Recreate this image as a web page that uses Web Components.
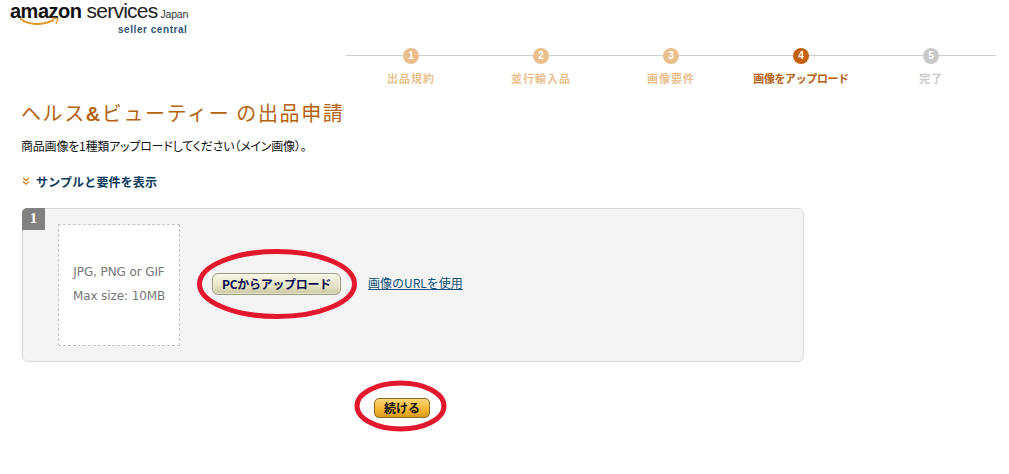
<!DOCTYPE html>
<html lang="ja">
<head>
<meta charset="utf-8">
<title>Seller Central</title>
<style>
  html, body { margin: 0; padding: 0; background: #fff; }
  body { font-family: "Liberation Sans", "Noto Sans CJK JP", sans-serif; font-size: 12px; color: #000; }
</style>
</head>
<body>
<seller-page>
  <seller-logo></seller-logo>
  <step-bar>
    <step-item num="1" state="done">出品規約</step-item>
    <step-item num="2" state="done">並行輸入品</step-item>
    <step-item num="3" state="done">画像要件</step-item>
    <step-item num="4" state="current">画像をアップロード</step-item>
    <step-item num="5" state="todo">完了</step-item>
  </step-bar>
  <page-title><span>ヘルス</span><b>&amp;</b><span>ビューティー の出品申請</span></page-title>
  <intro-text>商品画像を1種類アップロードしてください（メイン画像）。</intro-text>
  <toggle-link>サンプルと要件を表示</toggle-link>
  <upload-panel num="1"></upload-panel>
  <continue-row></continue-row>
</seller-page>

<script>
const CJK = '"Noto Sans CJK JP", sans-serif';

class SellerPage extends HTMLElement {
  connectedCallback() {
    this.attachShadow({ mode: 'open' });
    this.shadowRoot.innerHTML = `
      <style>
        :host { display: flex; flex-direction: column; width: 1009px; height: 474px; overflow: hidden; }
      </style>
      <slot></slot>`;
  }
}

class SellerLogo extends HTMLElement {
  connectedCallback() {
    this.attachShadow({ mode: 'open' });
    this.shadowRoot.innerHTML = `
      <style>
        :host { display: block; height: 36px; padding: 0 0 0 10px; position: relative; font-family: "Liberation Sans", sans-serif; }
        .top { display: flex; align-items: baseline; line-height: 21px; white-space: nowrap; color: #111; }
        .a { font-size: 20px; font-weight: bold; letter-spacing: -0.5px; }
        .s { font-size: 21px; margin-left: 5px; letter-spacing: -0.75px; color: #222; }
        .j { font-size: 10.5px; margin-left: 3px; letter-spacing: -0.2px; color: #333; }
        .sub { font-size: 10px; font-weight: bold; color: #2d5578; margin: 0 0 0 108px; line-height: 10px; letter-spacing: 0.55px; }
        svg { position: absolute; left: 19px; top: 17px; }
      </style>
      <div class="top"><span class="a">amazon</span><span class="s">services</span><span class="j">Japan</span></div>
      <div class="sub">seller central</div>
      <svg width="40" height="10" viewBox="0 0 40 10">
        <path d="M1 1.5 C9 8 22 9 35 3" fill="none" stroke="#e8982a" stroke-width="2"/>
        <path d="M33 1 L39 1.5 L37 7" fill="none" stroke="#e8982a" stroke-width="1.3"/>
      </svg>`;
  }
}

class StepBar extends HTMLElement {
  connectedCallback() {
    this.attachShadow({ mode: 'open' });
    this.shadowRoot.innerHTML = `
      <style>
        :host { display: flex; margin: 10px 0 0 346px; width: 650px; height: 50px; position: relative; }
        .line { position: absolute; left: 0; right: 0; top: 9px; height: 1px; background: #cfcfcf; }
        ::slotted(step-item) { flex: 1 1 0; }
      </style>
      <div class="line"></div>
      <slot></slot>`;
  }
}

class StepItem extends HTMLElement {
  connectedCallback() {
    const colors = { done: '#eabf8e', current: '#c4620f', todo: '#c9c9c9' };
    const text = { done: '#eabf8e', current: '#b5600f', todo: '#c9c9c9' };
    const state = this.getAttribute('state');
    const spacing = state === 'current' ? '-0.4px' : '1px';
    this.attachShadow({ mode: 'open' });
    this.shadowRoot.innerHTML = `
      <style>
        :host { display: flex; flex-direction: column; align-items: center; position: relative; font-family: ${CJK}; }
        .dot { width: 16px; height: 16px; border-radius: 50%; margin-top: 2px; background: ${colors[state]};
               color: #fff; font: bold 10px/16px "Liberation Sans", sans-serif; text-align: center; }
        .label { margin-top: 7px; font-size: 11px; line-height: 14px; font-weight: bold; letter-spacing: ${spacing}; color: ${text[state]}; white-space: nowrap; }
      </style>
      <div class="dot">${this.getAttribute('num')}</div>
      <div class="label"><slot></slot></div>`;
  }
}

class PageTitle extends HTMLElement {
  connectedCallback() {
    this.attachShadow({ mode: 'open' });
    this.shadowRoot.innerHTML = `
      <style>
        :host { display: block; margin: 3px 0 0 21px; height: 28px; line-height: 28px; font-family: ${CJK}; font-size: 20px;
                color: #b5620c; letter-spacing: 1.6px; white-space: nowrap; font-weight: 400; }
        ::slotted(b) { font-family: "Liberation Sans", sans-serif; font-weight: bold; }
      </style>
      <slot></slot>`;
  }
}

class IntroText extends HTMLElement {
  connectedCallback() {
    this.attachShadow({ mode: 'open' });
    this.shadowRoot.innerHTML = `
      <style>
        :host { display: block; margin: 11px 0 0 21px; line-height: 16px; font-size: 12px; font-family: ${CJK}; color: #111;
                font-feature-settings: "palt"; letter-spacing: -0.2px; white-space: nowrap; }
      </style>
      <slot></slot>`;
  }
}

class ToggleLink extends HTMLElement {
  connectedCallback() {
    this.attachShadow({ mode: 'open' });
    this.shadowRoot.innerHTML = `
      <style>
        :host { display: flex; align-items: center; gap: 6px; margin: 19px 0 0 22px; height: 16px; font-size: 12px; font-weight: bold;
                font-family: ${CJK}; color: #0b3b5c; white-space: nowrap; letter-spacing: 0.15px; }
      </style>
      <svg width="8" height="8" viewBox="0 0 8 8">
        <path d="M1 1 L4 3.5 L7 1 M1 4.5 L4 7 L7 4.5" fill="none" stroke="#d58a2c" stroke-width="1.4"/>
      </svg>
      <span><slot></slot></span>`;
  }
}

class UploadPanel extends HTMLElement {
  connectedCallback() {
    this.attachShadow({ mode: 'open' });
    this.shadowRoot.innerHTML = `
      <style>
        :host { display: flex; align-items: center; box-sizing: border-box; position: relative; margin: 19px 0 0 22px; width: 782px; height: 154px;
                padding-left: 35px; background: #f4f4f4; border: 1px solid #d8d8d8; border-radius: 6px; font-family: ${CJK}; }
        .num { position: absolute; left: -1px; top: -1px; width: 23px; height: 22px; background: #808080; border-radius: 5px 0 0 0;
               color: #fff; font: bold 15px/21px "Liberation Serif", serif; text-align: center; }
        .drop { box-sizing: border-box; width: 122px; height: 122px; padding-bottom: 2px; background: #fff; border: 1px dashed #c4c4c4;
                display: flex; flex-direction: column; justify-content: center; align-items: center; gap: 8px;
                font: 12px/16px "DejaVu Sans", sans-serif; color: #777; letter-spacing: -0.1px; }
        .pc { box-sizing: border-box; margin: -2px 0 0 32px; width: 129px; height: 22px; border: 1px solid #9a9a7c; border-radius: 6px;
              background: linear-gradient(#f8f7e8, #e6e4c6 60%, #c9c6a0); box-shadow: inset 0 0 0 1px rgba(255,255,255,.5);
              font-size: 12px; line-height: 20px; font-weight: bold; color: #0b0b50; text-align: center; white-space: nowrap; letter-spacing: -0.3px; }
        a { margin: -5px 0 0 27px; font-size: 12px; color: #0b4f78; text-decoration: underline; letter-spacing: 0; white-space: nowrap; }
        .ring { position: absolute; left: 173px; top: 38px; pointer-events: none; }
      </style>
      <div class="num">${this.getAttribute('num')}</div>
      <div class="drop"><span>JPG, PNG or GIF</span><span>Max size: 10MB</span></div>
      <div class="pc">PCからアップロード</div>
      <a href="#">画像のURLを使用</a>
      <svg class="ring" width="162" height="74" viewBox="0 0 162 74">
        <ellipse cx="81" cy="37" rx="77.5" ry="32.5" fill="none" stroke="#e3172d" stroke-width="5"/>
      </svg>`;
  }
}

class ContinueRow extends HTMLElement {
  connectedCallback() {
    this.attachShadow({ mode: 'open' });
    this.shadowRoot.innerHTML = `
      <style>
        :host { display: block; position: relative; margin: 36px 0 0 374px; font-family: ${CJK}; }
        .go { box-sizing: border-box; width: 56px; height: 20px; border: 1px solid #8a6a20; border-radius: 5px;
              background: linear-gradient(#fbd67a, #f3b52f 60%, #d99a1e); font-size: 12px; line-height: 18px; font-weight: bold; color: #111; text-align: center; }
        svg { position: absolute; left: -20px; top: -19px; pointer-events: none; }
      </style>
      <div class="go">続ける</div>
      <svg width="93" height="54" viewBox="0 0 93 54">
        <ellipse cx="46.5" cy="27" rx="43.5" ry="23" fill="none" stroke="#e3172d" stroke-width="5"/>
      </svg>`;
  }
}

customElements.define('seller-page', SellerPage);
customElements.define('seller-logo', SellerLogo);
customElements.define('step-bar', StepBar);
customElements.define('step-item', StepItem);
customElements.define('page-title', PageTitle);
customElements.define('intro-text', IntroText);
customElements.define('toggle-link', ToggleLink);
customElements.define('upload-panel', UploadPanel);
customElements.define('continue-row', ContinueRow);
</script>
</body>
</html>
